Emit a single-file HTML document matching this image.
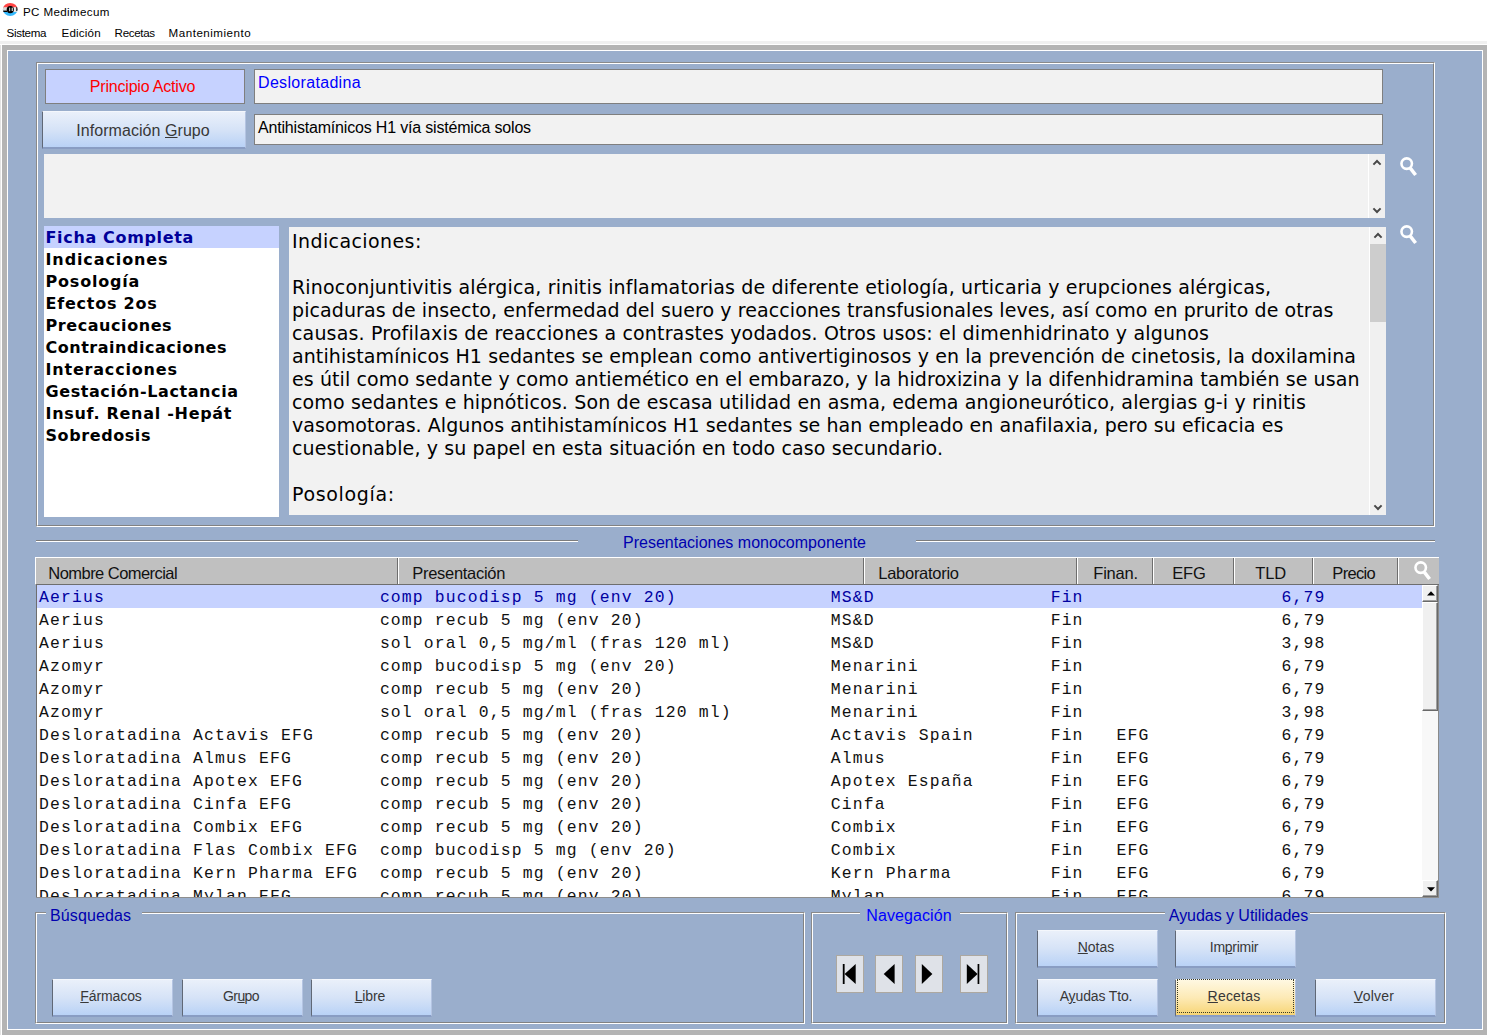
<!DOCTYPE html>
<html lang="es">
<head>
<meta charset="utf-8">
<title>PC Medimecum</title>
<style>
html,body{margin:0;padding:0;}
body{width:1487px;height:1035px;overflow:hidden;background:#fff;position:relative;
 font-family:"Liberation Sans",sans-serif;color:#000;}
.abs,.abs *{position:absolute;box-sizing:border-box;}
div{position:absolute;box-sizing:border-box;white-space:nowrap;}
/* title + menu */
#title{left:23px;top:4px;font-size:11.6px;line-height:16px;}
.menu{margin-left:-0.4px;top:25px;font-size:11.6px;line-height:16px;}
#menuline{left:0;top:41px;width:1487px;height:3px;background:#f0f0f0;}
/* outer frame */
#f0{left:0;top:45px;width:1px;height:990px;background:#e3e3e3;}
#frame{left:2px;top:45px;width:1485px;height:990px;background:#b4b4b4;}
#frameW{left:5px;top:5px;width:1476px;height:980px;background:#fff;}
#main{left:1px;top:1px;width:1474px;height:978px;background:#9aaecc;}
/* everything inside #page is positioned in page coordinates */
#page{left:0;top:0;width:1487px;height:1035px;}
.gb{border:1px solid;border-color:#8a8a8a #fff #fff #8a8a8a;}
.gb>i{position:absolute;left:0;top:0;right:0;bottom:0;border:1px solid;border-color:#fff #828282 #828282 #fff;display:block;}
.field{background:#f2f2f2;border:1px solid #7f7f7f;font-size:16px;line-height:18px;}
.btn{padding-right:3px;background:linear-gradient(#eaf0fa 0%,#d6e3f7 50%,#b9d2f6 100%);font-size:14px;text-align:center;color:#383838;
 border-left:1px solid #606876;border-top:1px solid #f4f7fc;border-right:1px solid #b4c4e2;border-bottom:2px solid #899dc3;}
.btn u{text-decoration:underline;}
.hl{background:#c6d2ff;}
/* left list */
#llist{left:44px;top:226px;width:235px;height:291px;background:#fff;overflow:hidden;}
.li{left:0;width:235px;height:22px;font-family:"DejaVu Sans","Liberation Sans",sans-serif;font-weight:bold;font-size:16px;line-height:22px;padding-left:1.5px;}
.li span{position:relative;top:1px;}
.lsel{background:#c6d2ff;color:#000099;}
/* text area */
#ta2{left:289px;top:227px;width:1097px;height:288px;background:#f2f2f2;overflow:hidden;}
.tl{left:3px;font-family:"DejaVu Sans","Liberation Sans",sans-serif;font-size:19px;line-height:23px;height:23px;margin-top:3px;}
/* table */
#thead{left:35px;top:557px;width:1404px;height:28px;background:#c0c0c0;border-top:1px solid #fff;border-left:1px solid #fff;border-bottom:1px solid #6e6e6e;}
.th{margin-left:-0.7px;top:564px;font-size:16.5px;line-height:18px;color:#111;}
.sep{top:558px;width:2px;height:26px;border-left:1px solid #6e6e6e;border-right:1px solid #fff;}
#tlist{left:36px;top:585px;width:1403px;height:312px;background:#fff;border-left:1px solid #6e6e6e;overflow:hidden;}
.row{left:0;width:1385px;height:23px;font-family:"Liberation Mono",monospace;font-size:16.4px;letter-spacing:1.16px;line-height:23px;white-space:pre;padding:1px 0 0 2px;color:#111;}
.sel{background:#c6d2ff;color:#0000a0;}
.gtitle{font-size:16px;line-height:18px;color:#0000b0;background:#9aaecc;}
.nav{top:955px;width:28px;height:38px;background:#dfe2e8;border:1px solid #ada8a0;}
.sbb{left:0;width:16px;background:#f0f0f0;border:1px solid;border-color:#fff #696969 #696969 #fff;box-shadow:inset -1px -1px 0 #a0a0a0;}
svg{position:absolute;display:block;}
</style>
</head>
<body>
<div id="title" style=";letter-spacing:0.358px">PC Medimecum</div>
<svg id="appicon" style="left:2px;top:2px" width="17" height="15" viewBox="0 0 17 15"><defs><clipPath id="cp"><ellipse cx="8.2" cy="7.4" rx="7.3" ry="6.5"/></clipPath></defs><g clip-path="url(#cp)"><rect width="17" height="7.5" fill="#ff4545"/><rect y="7.5" width="17" height="7.5" fill="#35b8fb"/><rect y="5.2" width="17" height="4.8" fill="#d9d9d9"/><rect x="0" y="8.6" width="5" height="1.4" fill="#000"/><rect x="14.2" y="5" width="3" height="4" fill="#222"/><ellipse cx="8.3" cy="7.6" rx="3.6" ry="3.7" fill="#000"/><rect x="7.2" y="5.6" width="1" height="3.6" fill="#ddd"/><rect x="9.6" y="5.6" width="1.4" height="3.4" fill="#bbb"/><rect x="12.2" y="5.6" width="1.2" height="3.8" fill="#f4f4f4"/></g></svg>
<div class="menu" id="m1" style="left:7px;letter-spacing:-0.342px">Sistema</div>
<div class="menu" id="m2" style="left:62px;letter-spacing:0.167px">Edición</div>
<div class="menu" id="m3" style="left:115px;letter-spacing:-0.333px">Recetas</div>
<div class="menu" id="m4" style="left:169px;letter-spacing:0.499px">Mantenimiento</div>
<div id="menuline"></div>
<div id="f0"></div>
<div id="frame"><div id="frameW"><div id="main"></div></div></div>

<div id="page">
<!-- group box 1 -->
<div class="gb" style="left:36px;top:62px;width:1399px;height:465px"><i></i></div>
<div class="hl" style="left:45px;top:69px;width:200px;height:35px;border:1px solid #7f7f7f;text-align:center;font-size:16px;line-height:33px;color:#ff0000;padding-right:5px;;letter-spacing:-0.2px"><span id="pa">Principio Activo</span></div>
<div class="field" style="left:254px;top:69px;width:1129px;height:35px;padding:4px 0 0 3px;color:#0000ff;;letter-spacing:0.325px"><span id="f1">Desloratadina</span></div>
<div class="btn" style="left:42px;top:111px;width:204px;height:38px;font-size:16px;line-height:37px;padding-right:2px;;letter-spacing:0.062px"><span id="ig">Información <u>G</u>rupo</span></div>
<div class="field" style="left:254px;top:114px;width:1129px;height:31px;padding:4px 0 0 3px;;letter-spacing:-0.184px"><span id="f2">Antihistamínicos H1 vía sistémica solos</span></div>
<div id="ta1" style="left:44px;top:154px;width:1341px;height:64px;background:#f2f2f2;">
 <div style="left:1324px;top:0;width:17px;height:64px;background:#f0f0f0;border-left:1px solid #fff;"></div>
 <svg style="left:1328px;top:4px" width="10" height="8" viewBox="0 0 10 8"><path d="M1.4 6.6 L5 3 L8.6 6.6" fill="none" stroke="#484848" stroke-width="2"/></svg>
 <svg style="left:1328px;top:52.5px" width="10" height="8" viewBox="0 0 10 8"><path d="M1.4 1.4 L5 5 L8.6 1.4" fill="none" stroke="#484848" stroke-width="2"/></svg>
</div>
<svg class="mag" style="left:1399px;top:157px" width="19" height="20" viewBox="0 0 19 20"><circle cx="7.7" cy="6.6" r="5.25" fill="none" stroke="#fff" stroke-width="2.6"/><path d="M11.3 11.1 L16.6 18" stroke="#fff" stroke-width="3.5" stroke-linecap="butt"/></svg>
<svg class="mag" style="left:1399px;top:225px" width="19" height="20" viewBox="0 0 19 20"><circle cx="7.7" cy="6.6" r="5.25" fill="none" stroke="#fff" stroke-width="2.6"/><path d="M11.3 11.1 L16.6 18" stroke="#fff" stroke-width="3.5" stroke-linecap="butt"/></svg>

<div id="llist">
<div class="li lsel" style="top:0px;letter-spacing:0.66px"><span id="li0">Ficha Completa</span></div>
<div class="li" style="top:22px;letter-spacing:0.891px"><span id="li1">Indicaciones</span></div>
<div class="li" style="top:44px;letter-spacing:0.8px"><span id="li2">Posología</span></div>
<div class="li" style="top:66px;letter-spacing:0.76px"><span id="li3">Efectos 2os</span></div>
<div class="li" style="top:88px;letter-spacing:0.57px"><span id="li4">Precauciones</span></div>
<div class="li" style="top:110px;letter-spacing:0.511px"><span id="li5">Contraindicaciones</span></div>
<div class="li" style="top:132px;letter-spacing:0.805px"><span id="li6">Interacciones</span></div>
<div class="li" style="top:154px;letter-spacing:0.583px"><span id="li7">Gestación-Lactancia</span></div>
<div class="li" style="top:176px;letter-spacing:0.713px"><span id="li8">Insuf. Renal -Hepát</span></div>
<div class="li" style="top:198px;letter-spacing:0.586px"><span id="li9">Sobredosis</span></div>
</div>
<div id="ta2">
<div class="tl" id="tl0" style="top:0px;letter-spacing:0.402px">Indicaciones:</div>
<div class="tl" id="tl2" style="top:46px;letter-spacing:0.165px">Rinoconjuntivitis alérgica, rinitis inflamatorias de diferente etiología, urticaria y erupciones alérgicas,</div>
<div class="tl" id="tl3" style="top:69px;letter-spacing:0.087px">picaduras de insecto, enfermedad del suero y reacciones transfusionales leves, así como en prurito de otras</div>
<div class="tl" id="tl4" style="top:92px;letter-spacing:0.161px">causas. Profilaxis de reacciones a contrastes yodados. Otros usos: el dimenhidrinato y algunos</div>
<div class="tl" id="tl5" style="top:115px;letter-spacing:0.094px">antihistamínicos H1 sedantes se emplean como antivertiginosos y en la prevención de cinetosis, la doxilamina</div>
<div class="tl" id="tl6" style="top:138px;letter-spacing:0.1px">es útil como sedante y como antiemético en el embarazo, y la hidroxizina y la difenhidramina también se usan</div>
<div class="tl" id="tl7" style="top:161px;letter-spacing:0.143px">como sedantes e hipnóticos. Son de escasa utilidad en asma, edema angioneurótico, alergias g-i y rinitis</div>
<div class="tl" id="tl8" style="top:184px;letter-spacing:0.059px">vasomotoras. Algunos antihistamínicos H1 sedantes se han empleado en anafilaxia, pero su eficacia es</div>
<div class="tl" id="tl9" style="top:207px;letter-spacing:0.106px">cuestionable, y su papel en esta situación en todo caso secundario.</div>
<div class="tl" id="tl11" style="top:253px;letter-spacing:0.667px">Posología:</div>
 <div style="left:1080px;top:0;width:17px;height:288px;background:#f0f0f0;border-left:1px solid #fff;"></div>
 <div style="left:1081px;top:17px;width:16px;height:78px;background:#cdcdcd;"></div>
 <svg style="left:1084px;top:4px" width="10" height="8" viewBox="0 0 10 8"><path d="M1.4 6.6 L5 3 L8.6 6.6" fill="none" stroke="#484848" stroke-width="2"/></svg>
 <svg style="left:1084px;top:276.5px" width="10" height="8" viewBox="0 0 10 8"><path d="M1.4 1.4 L5 5 L8.6 1.4" fill="none" stroke="#484848" stroke-width="2"/></svg>
</div>

<!-- group box 2 top line -->
<div style="left:36px;top:540px;width:1399px;height:2px;border-top:1px solid #7c7c7c;background:#fff;"></div>
<div class="gtitle" style="left:578px;top:534px;width:338px;text-align:center;padding-right:5px;;letter-spacing:0.005px"><span id="g0">Presentaciones monocomponente</span></div>

<!-- table -->
<div id="thead"></div>
<div class="th" id="th1" style="left:49px;letter-spacing:-0.546px">Nombre Comercial</div>
<div class="th" id="th2" style="left:413px;letter-spacing:-0.301px">Presentación</div>
<div class="th" id="th3" style="left:879px;letter-spacing:-0.28px">Laboratorio</div>
<div class="th" id="th4" style="left:1094px;letter-spacing:-0.22px">Finan.</div>
<div class="th" id="th5" style="left:1173px;letter-spacing:-0.25px">EFG</div>
<div class="th" id="th6" style="left:1256px;letter-spacing:-0.15px">TLD</div>
<div class="th" id="th7" style="left:1333px;letter-spacing:-0.66px">Precio</div>
<div class="sep" style="left:397px"></div>
<div class="sep" style="left:863px"></div>
<div class="sep" style="left:1076px"></div>
<div class="sep" style="left:1152px"></div>
<div class="sep" style="left:1233px"></div>
<div class="sep" style="left:1312px"></div>
<div class="sep" style="left:1397px"></div>
<svg class="mag" style="left:1413px;top:561px" width="19" height="20" viewBox="0 0 19 20"><circle cx="7.7" cy="6.6" r="5.25" fill="none" stroke="#fff" stroke-width="2.6"/><path d="M11.3 11.1 L16.6 18" stroke="#fff" stroke-width="3.5" stroke-linecap="butt"/></svg>
<div id="tlist">
<div class="row sel" style="top:0px">Aerius                         comp bucodisp 5 mg (env 20)              MS&amp;D                Fin                  6,79</div>
<div class="row" style="top:23px">Aerius                         comp recub 5 mg (env 20)                 MS&amp;D                Fin                  6,79</div>
<div class="row" style="top:46px">Aerius                         sol oral 0,5 mg/ml (fras 120 ml)         MS&amp;D                Fin                  3,98</div>
<div class="row" style="top:69px">Azomyr                         comp bucodisp 5 mg (env 20)              Menarini            Fin                  6,79</div>
<div class="row" style="top:92px">Azomyr                         comp recub 5 mg (env 20)                 Menarini            Fin                  6,79</div>
<div class="row" style="top:115px">Azomyr                         sol oral 0,5 mg/ml (fras 120 ml)         Menarini            Fin                  3,98</div>
<div class="row" style="top:138px">Desloratadina Actavis EFG      comp recub 5 mg (env 20)                 Actavis Spain       Fin   EFG            6,79</div>
<div class="row" style="top:161px">Desloratadina Almus EFG        comp recub 5 mg (env 20)                 Almus               Fin   EFG            6,79</div>
<div class="row" style="top:184px">Desloratadina Apotex EFG       comp recub 5 mg (env 20)                 Apotex España       Fin   EFG            6,79</div>
<div class="row" style="top:207px">Desloratadina Cinfa EFG        comp recub 5 mg (env 20)                 Cinfa               Fin   EFG            6,79</div>
<div class="row" style="top:230px">Desloratadina Combix EFG       comp recub 5 mg (env 20)                 Combix              Fin   EFG            6,79</div>
<div class="row" style="top:253px">Desloratadina Flas Combix EFG  comp bucodisp 5 mg (env 20)              Combix              Fin   EFG            6,79</div>
<div class="row" style="top:276px">Desloratadina Kern Pharma EFG  comp recub 5 mg (env 20)                 Kern Pharma         Fin   EFG            6,79</div>
<div class="row" style="top:299px">Desloratadina Mylan EFG        comp recub 5 mg (env 20)                 Mylan               Fin   EFG            6,79</div>
 <div id="vsb" style="left:1385px;top:0;width:17px;height:312px;background:#f8f8f8;border-right:1px solid #8a8a8a;">
  <div class="sbb" style="top:0;height:17px;"></div>
  <div class="sbb" style="top:17px;height:109px;"></div>
  <div class="sbb" style="top:295px;height:17px;"></div>
  <svg style="left:5px;top:6px" width="8" height="5" viewBox="0 0 8 5"><path d="M0 4.5 L4 0.3 L8 4.5Z" fill="#000"/></svg>
  <svg style="left:5px;top:302px" width="8" height="5" viewBox="0 0 8 5"><path d="M0 0.3 L4 4.5 L8 0.3Z" fill="#000"/></svg>
 </div>
</div>
<div style="left:36px;top:897px;width:1403px;height:1px;background:#8e8e8e;"></div>

<!-- bottom group boxes -->
<div class="gb" style="left:35px;top:912px;width:770px;height:112px"><i></i></div>
<div class="gtitle" style="left:46px;top:907px;width:96px;padding-left:4px;;letter-spacing:0.112px"><span id="g1">Búsquedas</span></div>
<div class="btn" style="left:52px;top:979px;width:121px;height:38px;line-height:32px;;letter-spacing:-0.093px"><span id="b1"><u>F</u>ármacos</span></div>
<div class="btn" style="left:182px;top:979px;width:121px;height:38px;line-height:32px;;letter-spacing:-0.6px"><span id="b2">Gr<u>u</u>po</span></div>
<div class="btn" style="left:311px;top:979px;width:121px;height:38px;line-height:32px;;letter-spacing:-0.1px"><span id="b3"><u>L</u>ibre</span></div>

<div class="gb" style="left:811px;top:912px;width:197px;height:112px"><i></i></div>
<div class="gtitle" style="left:860px;top:907px;width:100px;text-align:center;padding-right:2px;color:#0000ff;;letter-spacing:0.084px"><span id="g2">Navegación</span></div>
<div class="nav" style="left:836px"><svg style="left:-1px;top:-1px" width="27" height="37" viewBox="0 0 27 37"><rect x="6.8" y="9" width="1.8" height="20" fill="#000"/><path d="M19.7 9 L19.7 29 L8.6 18.9Z" fill="#000"/></svg></div>
<div class="nav" style="left:875px"><svg style="left:-1px;top:-1px" width="27" height="37" viewBox="0 0 27 37"><path d="M19.6 9 L19.6 29 L8.7 19Z" fill="#000"/></svg></div>
<div class="nav" style="left:915px"><svg style="left:-1px;top:-1px" width="27" height="37" viewBox="0 0 27 37"><path d="M6.8 9 L6.8 29 L17.4 19Z" fill="#000"/></svg></div>
<div class="nav" style="left:960px"><svg style="left:-1px;top:-1px" width="27" height="37" viewBox="0 0 27 37"><rect x="17.6" y="9" width="1.7" height="20" fill="#000"/><path d="M6.8 9 L6.8 29 L17.6 19Z" fill="#000"/></svg></div>

<div class="gb" style="left:1015px;top:912px;width:431px;height:112px"><i></i></div>
<div class="gtitle" style="left:1165px;top:907px;width:145px;text-align:center;padding-left:2px;;letter-spacing:-0.046px"><span id="g3">Ayudas y Utilidades</span></div>
<div class="btn" style="left:1037px;top:930px;width:121px;height:38px;line-height:32px;"><span id="b4"><u>N</u>otas</span></div>
<div class="btn" style="left:1175px;top:930px;width:121px;height:38px;line-height:32px;;letter-spacing:-0.284px"><span id="b5">Im<u>p</u>rimir</span></div>
<div class="btn" style="left:1037px;top:979px;width:121px;height:38px;line-height:32px;;letter-spacing:-0.14px"><span id="b6">A<u>y</u>udas Tto.</span></div>
<div class="btn" id="recetas" style="left:1175px;top:979px;width:121px;height:38px;line-height:32px;background:linear-gradient(#fff8e2 0%,#fdeab6 50%,#f7d575 100%);;letter-spacing:0.204px"><span id="b7"><u>R</u>ecetas</span><div style="left:1px;top:-1px;width:117px;height:34px;border:1px dotted #3a3a20;"></div></div>
<div class="btn" style="left:1315px;top:979px;width:121px;height:38px;line-height:32px;;letter-spacing:0.24px"><span id="b8"><u>V</u>olver</span></div>
</div>
</body>
</html>
